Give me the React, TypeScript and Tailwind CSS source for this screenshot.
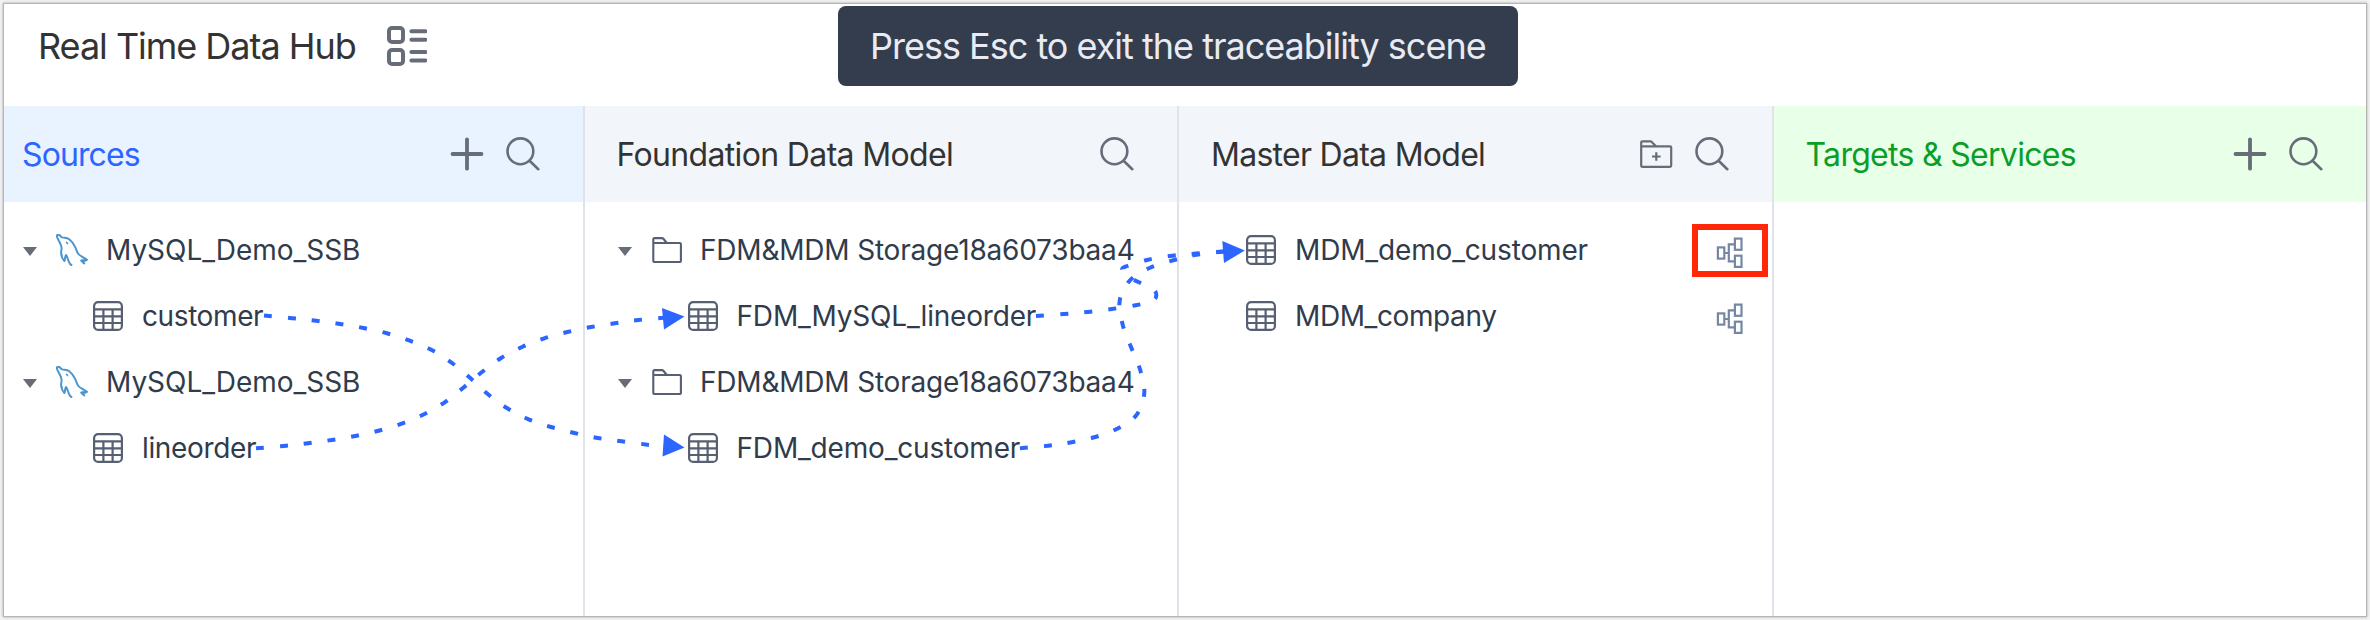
import type { ReactNode } from "react";

type Point = [number, number];

interface Link {
  points: Point[];
  length: number;
  arrow?: string;
}

const links: Link[] = [
  {
    points: [[264, 315.5], [292, 318.2], [316, 320.7], [340, 324], [363.5, 328], [386.8, 333.3], [409.7, 340.7], [431.7, 350], [452, 363], [470.3, 378], [487.7, 394], [507.3, 408.3], [528.7, 419.3], [551, 427], [574.3, 433], [597.7, 438], [621.7, 441.3], [649, 444.9]],
    length: 17 * 24 + 8,
    arrow: "M664 434.5L684.5 447.5L662.5 456.5Z",
  },
  {
    points: [[256, 448.3], [284, 446], [308, 443.3], [331.7, 440], [355.3, 436], [378.5, 430.7], [401.7, 423.7], [424, 414.3], [444.7, 402.3], [463.3, 387.7], [481.7, 372.3], [501, 358], [522, 347], [544.3, 338.3], [567.3, 332], [591, 327], [614.7, 323.3], [638.3, 320], [666, 317.6]],
    length: 18 * 24 + 8,
    arrow: "M662 308L684.5 316.5L664 329.5Z",
  },
  {
    points: [[1036, 316], [1064, 314], [1087.7, 312], [1111.7, 309], [1135.7, 305.3], [1152, 301], [1156.3, 295.7], [1153, 289], [1138.3, 282], [1127, 276], [1122.5, 270.5], [1125.3, 266.7], [1148, 259.7], [1172.3, 255.7], [1196, 253.6], [1224, 251.5]],
    length: 11 * 24 + 8,
    arrow: "M1222.3 241L1244.8 250.5L1224 263Z",
  },
  {
    points: [[1020, 448.2], [1048, 445.7], [1071.6, 442.2], [1095.3, 437], [1117.7, 428.5], [1136.7, 414.7], [1144.3, 393], [1140, 369.3], [1131, 347], [1122.7, 324.7], [1119.7, 300.7], [1130, 280.3], [1150, 267.7], [1173.3, 260.3], [1196.3, 254.8], [1224, 251.5]],
    length: 15 * 24 + 8,
  },
];

/** Catmull-Rom spline through the given points, as cubic segments. */
function spline(p: Point[]): string {
  let d = `M${p[0][0]} ${p[0][1]}`;
  for (let i = 0; i < p.length - 1; i++) {
    const a = p[Math.max(i - 1, 0)];
    const b = p[i];
    const c = p[i + 1];
    const e = p[Math.min(i + 2, p.length - 1)];
    d += `C${b[0] + (c[0] - a[0]) / 6} ${b[1] + (c[1] - a[1]) / 6} ${c[0] - (e[0] - b[0]) / 6} ${c[1] - (e[1] - b[1]) / 6} ${c[0]} ${c[1]}`;
  }
  return d;
}

function LinkLayer() {
  return (
    <svg className="pointer-events-none absolute left-0 top-0" width="2370" height="620" fill="none">
      {links.map((l, i) => (
        <g key={i}>
          <path d={spline(l.points)} pathLength={l.length} stroke="#2c65ff" strokeWidth="4" strokeDasharray="8 16" />
          {l.arrow && <path d={l.arrow} fill="#2c65ff" />}
        </g>
      ))}
    </svg>
  );
}

function PlusIcon() {
  return (
    <svg className="h-[34px] w-[34px]" viewBox="0 0 34 34" fill="none" stroke="#666d79" strokeWidth="3.8" strokeLinecap="round">
      <path d="M17 2.3V31.7M2.5 17H31.5" />
    </svg>
  );
}

function SearchIcon() {
  return (
    <svg className="h-[34px] w-[34px]" viewBox="0 0 34 34" fill="none" stroke="#666d79" strokeWidth="2.6" strokeLinecap="round">
      <circle cx="14.4" cy="14.3" r="12.9" />
      <path d="M23.6 23.8L32.3 32.2" />
    </svg>
  );
}

function FolderPlusIcon() {
  return (
    <svg className="h-[34px] w-[34px]" viewBox="0 0 34 34" fill="none" stroke="#666d79" strokeWidth="2.2" strokeLinejoin="round">
      <path d="M2.2 9.3V5.5Q2.2 4.4 3.3 4.4H12.2L17 9.3H31Q32.2 9.3 32.2 10.4V28.6Q32.2 29.8 31 29.8H3.4Q2.2 29.8 2.2 28.6V9.3H17" />
      <path d="M17.3 15.2V23.8M13 19.5H21.6" />
    </svg>
  );
}

function ViewIcon() {
  return (
    <svg className="h-10 w-10" viewBox="0 0 40 40" fill="none" stroke="#666d79" strokeWidth="4" strokeLinecap="round">
      <rect x="2" y="2" width="14" height="14" rx="3" />
      <rect x="2" y="24" width="14" height="14" rx="3" />
      <path d="M24.4 5.3H38.4M24.4 13.7H38.4M24.4 26H38.4M24.4 34.4H38.4" />
    </svg>
  );
}

function Caret() {
  return (
    <svg className="mt-[3px] h-[9px] w-[14px] shrink-0" viewBox="0 0 14 9">
      <path d="M0 0H14L7 9Z" fill="#666d79" />
    </svg>
  );
}

function MysqlIcon() {
  return (
    <svg className="h-8 w-8 shrink-0" viewBox="0 0 32 32" fill="none" stroke="#4b96cf" strokeWidth="2" strokeLinecap="round" strokeLinejoin="round">
      <path d="M5.6 21C4.2 18.6 5.8 16.4 5.6 13.8C5.4 11.2 4.2 9.4 3.2 7.4C2.4 5.8 .8 3.4 .9 1.8C1 .4 2.8 .6 3.8 1.4C4.8 2.2 5.2 3 6.4 3.4C8.4 4 11 3.6 13.2 5.2C16 7.2 18 10.4 19.4 13.4C20.4 15.6 20.8 18 22.4 20C24.4 22.4 28.4 23.4 30.8 25.8C29 26.4 26.6 25.6 25.2 26.6C26.2 27.8 27.4 28.4 28.2 29.4" />
      <path d="M5.6 21C5.4 23 7 25.4 8.4 27C9.4 25.2 8.6 22.8 10 21C11.4 22.4 11.6 25 12.6 27C13.4 28.6 13.4 30 15.4 31" />
      <path d="M30.6 25.8C29.4 27.2 27.6 27 26.8 27.4" />
      <path d="M10.4 8.2L11.6 9.6" strokeWidth="1.5" />
    </svg>
  );
}

function TableIcon() {
  return (
    <svg className="h-[30px] w-[30px] shrink-0" viewBox="0 0 30 30" fill="none" stroke="#566072" strokeWidth="2.2">
      <rect x="1.1" y="1.1" width="27.8" height="27.8" rx="4" />
      <path d="M1 8.3H29M1 15.3H29M1 22H29M10.4 8.3V29M19.6 8.3V29" />
    </svg>
  );
}

function FolderIcon() {
  return (
    <svg className="h-[26px] w-[30px] shrink-0" viewBox="0 0 30 26" fill="none" stroke="#566072" strokeWidth="2.1" strokeLinejoin="round">
      <path d="M1.3 6V2.2Q1.3 1.1 2.4 1.1H9.6Q10.8 1.1 11.6 2L14.8 6H27.8Q28.9 6 28.9 7V24Q28.9 25 27.8 25H2.4Q1.3 25 1.3 24V6H14.8" />
    </svg>
  );
}

function LineageIcon() {
  return (
    <svg className="h-8 w-7 shrink-0" viewBox="0 0 28 32" fill="none" stroke="#7587a2" strokeWidth="2.2">
      <rect x="1.9" y="10.4" width="6.4" height="11.2" />
      <rect x="18.9" y="1.6" width="6.6" height="11.2" />
      <rect x="18.9" y="18.7" width="6.6" height="11.2" />
      <path d="M8.3 16H12.8M18.9 7.4H12.8V24.4H18.9" />
    </svg>
  );
}

interface ColumnProps {
  title: ReactNode;
  actions: ReactNode;
  headClass: string;
  className: string;
  children?: ReactNode;
}

function Column({ title, actions, headClass, className, children }: ColumnProps) {
  return (
    <section className={`flex flex-col border-[#e0e4ea] ${className}`}>
      <header className={`flex h-24 items-center justify-between pr-[43px] text-[32px] leading-none ${headClass}`}>
        <h2 className="pt-0.5">{title}</h2>
        <div className="flex items-center gap-[22px]">{actions}</div>
      </header>
      <div className="flex flex-col pt-[15px] text-[28px] leading-none text-[#303b4b]">{children}</div>
    </section>
  );
}

function Row({ className, children }: { className: string; children: ReactNode }) {
  return <div className={`flex h-[66px] items-center whitespace-nowrap ${className}`}>{children}</div>;
}

export default function App() {
  return (
    <div className="relative h-[620px] w-[2370px] overflow-hidden bg-[#f4f4f4] p-1 font-[Inter,'Liberation_Sans',sans-serif]">
      <div className="flex h-[612px] w-[2362px] flex-col bg-white shadow-[0_0_0_1px_#b4b4b4,0_0_3px_1px_#aaa]">
        <div className="flex h-[102px] items-start pl-[34px] pt-[22px]">
          <h1 className="w-[349px] whitespace-nowrap text-[36px] leading-10 tracking-[-1.03px] text-[#333]">Real Time Data Hub</h1>
          <ViewIcon />
        </div>
        <main className="flex flex-1">
          <Column
            className="w-[581px] border-r-2"
            headClass="bg-[#e8f3ff] pl-[18px] text-[#2c65ff]"
            title={<span className="tracking-[-0.9px]">Sources</span>}
            actions={<><PlusIcon /><SearchIcon /></>}
          >
            <Row className="pl-[19px]">
              <Caret />
              <div className="ml-[19px] mr-[18px]"><MysqlIcon /></div>
              <span className="tracking-[-0.04px]">MySQL_Demo_SSB</span>
            </Row>
            <Row className="gap-[19px] pl-[89px]">
              <TableIcon />
              <span className="tracking-[-0.4px]">customer</span>
            </Row>
            <Row className="pl-[19px]">
              <Caret />
              <div className="ml-[19px] mr-[18px]"><MysqlIcon /></div>
              <span className="tracking-[-0.04px]">MySQL_Demo_SSB</span>
            </Row>
            <Row className="gap-[19px] pl-[89px]">
              <TableIcon />
              <span className="tracking-[-0.35px]">lineorder</span>
            </Row>
          </Column>
          <Column
            className="w-[594px] border-r-2"
            headClass="bg-[#f2f5fa] pl-[31.5px] text-[#333]"
            title={<span className="tracking-[-0.65px]">Foundation Data Model</span>}
            actions={<SearchIcon />}
          >
            <Row className="pl-[33px]">
              <Caret />
              <div className="ml-5 mr-[18px]"><FolderIcon /></div>
              <span className="tracking-[-0.2px]">FDM&amp;MDM Storage18a6073baa4</span>
            </Row>
            <Row className="gap-[18.5px] pl-[103px]">
              <TableIcon />
              <span className="tracking-[-0.18px]">FDM_MySQL_lineorder</span>
            </Row>
            <Row className="pl-[33px]">
              <Caret />
              <div className="ml-5 mr-[18px]"><FolderIcon /></div>
              <span className="tracking-[-0.2px]">FDM&amp;MDM Storage18a6073baa4</span>
            </Row>
            <Row className="gap-[18.5px] pl-[103px]">
              <TableIcon />
              <span className="tracking-[-0.18px]">FDM_demo_customer</span>
            </Row>
          </Column>
          <Column
            className="w-[595px] border-r-2"
            headClass="bg-[#f2f5fa] pl-[32px] text-[#333]"
            title={<span className="tracking-[-0.72px]">Master Data Model</span>}
            actions={<><FolderPlusIcon /><SearchIcon /></>}
          >
            <Row className="gap-[19px] pl-[67px] pr-1">
              <TableIcon />
              <span className="tracking-[-0.15px]">MDM_demo_customer</span>
              <div className="ml-auto flex h-[53px] w-[76px] items-center border-[6px] border-[#ff2708] pl-[18px] pt-[5px]">
                <LineageIcon />
              </div>
            </Row>
            <Row className="gap-[19px] pl-[67px] pr-7">
              <TableIcon />
              <span className="tracking-[-0.4px]">MDM_company</span>
              <div className="ml-auto pt-[5px]"><LineageIcon /></div>
            </Row>
          </Column>
          <Column
            className="flex-1"
            headClass="bg-[#e8ffe8] pl-[31.5px] text-[#0a9e28]"
            title={<span className="tracking-[-0.7px]">Targets &amp; Services</span>}
            actions={<><PlusIcon /><SearchIcon /></>}
          />
        </main>
      </div>
      <LinkLayer />
      <div className="absolute left-[838px] top-1.5 flex h-20 w-[680px] items-center whitespace-nowrap rounded-lg bg-[#343d4d] pl-[32px] text-[36px] leading-none tracking-[-1px] text-[#e8ebf1]">
        Press Esc to exit the traceability scene
      </div>
    </div>
  );
}
